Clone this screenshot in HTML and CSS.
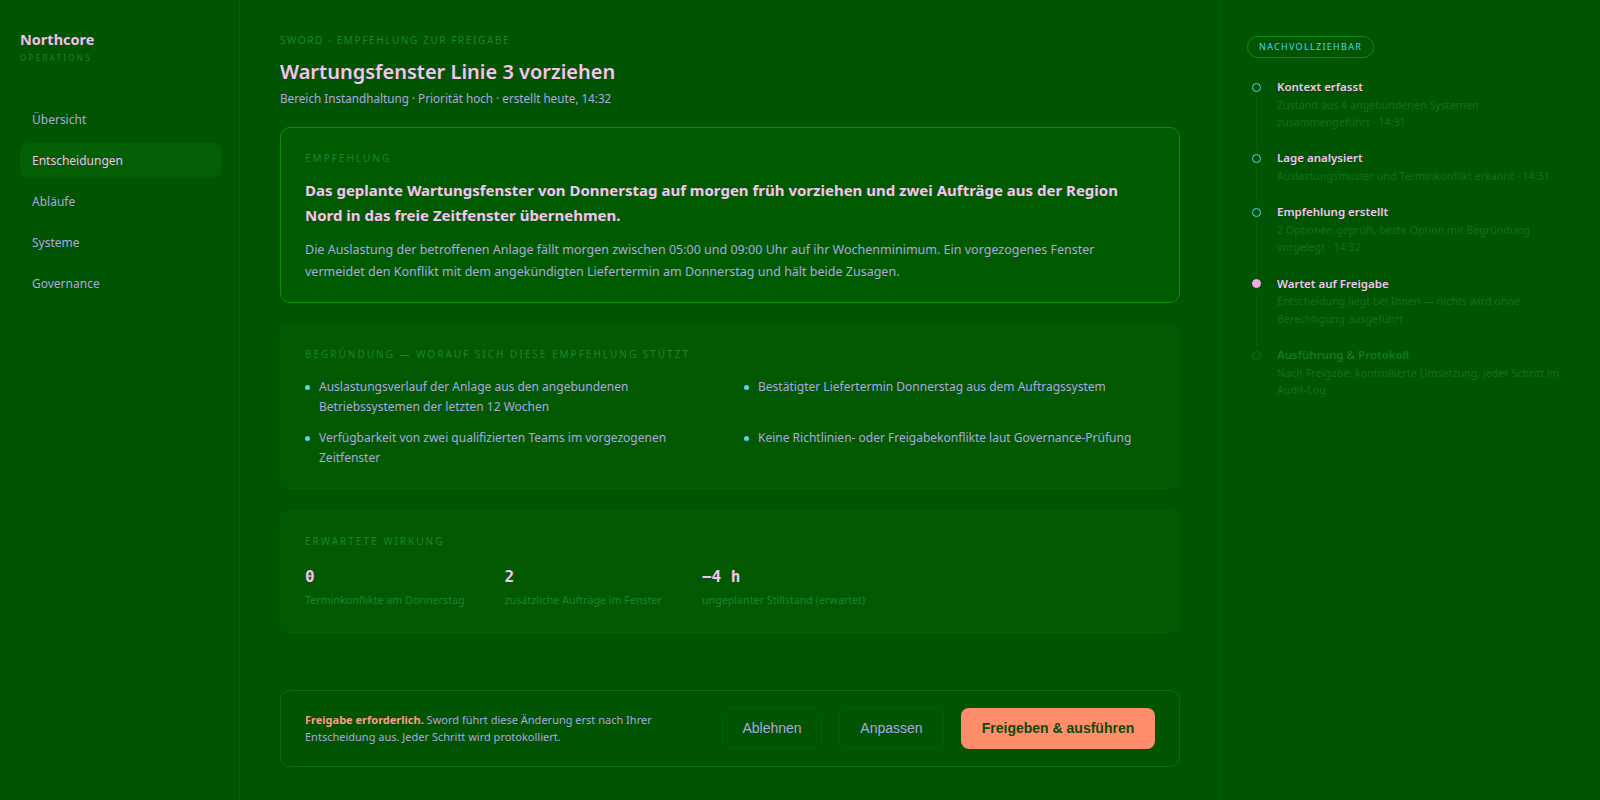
FILE: index.html
```html
<!DOCTYPE html>
<html lang="de">
<head>
<meta charset="utf-8">
<title>Northcore Operations</title>
<link rel="stylesheet" href="styles.css">
</head>
<body>
<div class="app">
  <aside class="sidebar">
    <div class="brand">
      <div class="brand-name">Northcore</div>
      <div class="brand-sub">OPERATIONS</div>
    </div>
    <nav class="nav">
      <a class="nav-item">Übersicht</a>
      <a class="nav-item active">Entscheidungen</a>
      <a class="nav-item">Abläufe</a>
      <a class="nav-item">Systeme</a>
      <a class="nav-item">Governance</a>
    </nav>
  </aside>

  <main class="main">
    <header class="page-head">
      <div class="eyebrow">SWORD · EMPFEHLUNG ZUR FREIGABE</div>
      <h1 class="title">Wartungsfenster Linie 3 vorziehen</h1>
      <div class="meta">Bereich Instandhaltung · Priorität hoch · erstellt heute, 14:32</div>
    </header>

    <section class="card card-primary">
      <div class="label">EMPFEHLUNG</div>
      <p class="headline">Das geplante Wartungsfenster von Donnerstag auf morgen früh vorziehen und zwei Aufträge aus der Region Nord in das freie Zeitfenster übernehmen.</p>
      <p class="body">Die Auslastung der betroffenen Anlage fällt morgen zwischen 05:00 und 09:00 Uhr auf ihr Wochenminimum. Ein vorgezogenes Fenster vermeidet den Konflikt mit dem angekündigten Liefertermin am Donnerstag und hält beide Zusagen.</p>
    </section>

    <section class="card card-reasons">
      <div class="label">BEGRÜNDUNG — WORAUF SICH DIESE EMPFEHLUNG STÜTZT</div>
      <ul class="reasons">
        <li>Auslastungsverlauf der Anlage aus den angebundenen Betriebssystemen der letzten 12 Wochen</li>
        <li>Bestätigter Liefertermin Donnerstag aus dem Auftragssystem</li>
        <li>Verfügbarkeit von zwei qualifizierten Teams im vorgezogenen Zeitfenster</li>
        <li>Keine Richtlinien- oder Freigabekonflikte laut Governance-Prüfung</li>
      </ul>
    </section>

    <section class="card card-impact">
      <div class="label">ERWARTETE WIRKUNG</div>
      <div class="impact">
        <div class="metric">
          <div class="metric-value">0</div>
          <div class="metric-label">Terminkonflikte am Donnerstag</div>
        </div>
        <div class="metric">
          <div class="metric-value">2</div>
          <div class="metric-label">zusätzliche Aufträge im Fenster</div>
        </div>
        <div class="metric">
          <div class="metric-value">−4 h</div>
          <div class="metric-label">ungeplanter Stillstand (erwartet)</div>
        </div>
      </div>
    </section>

    <section class="action-bar">
      <p class="action-text"><strong>Freigabe erforderlich.</strong> Sword führt diese Änderung erst nach Ihrer Entscheidung aus. Jeder Schritt wird protokolliert.</p>
      <div class="actions">
        <button class="btn btn-ghost">Ablehnen</button>
        <button class="btn btn-ghost btn-adjust">Anpassen</button>
        <button class="btn btn-primary">Freigeben &amp; ausführen</button>
      </div>
    </section>
  </main>

  <aside class="trail">
    <div class="badge">NACHVOLLZIEHBAR</div>
    <ol class="steps">
      <li class="step done">
        <span class="dot"></span>
        <div class="step-title">Kontext erfasst</div>
        <div class="step-desc">Zustand aus 4 angebundenen Systemen zusammengeführt · 14:31</div>
      </li>
      <li class="step done">
        <span class="dot"></span>
        <div class="step-title">Lage analysiert</div>
        <div class="step-desc">Auslastungsmuster und Terminkonflikt erkannt · 14:31</div>
      </li>
      <li class="step done">
        <span class="dot"></span>
        <div class="step-title">Empfehlung erstellt</div>
        <div class="step-desc">2 Optionen geprüft, beste Option mit Begründung vorgelegt · 14:32</div>
      </li>
      <li class="step current">
        <span class="dot"></span>
        <div class="step-title">Wartet auf Freigabe</div>
        <div class="step-desc">Entscheidung liegt bei Ihnen — nichts wird ohne Berechtigung ausgeführt</div>
      </li>
      <li class="step pending">
        <span class="dot"></span>
        <div class="step-title">Ausführung &amp; Protokoll</div>
        <div class="step-desc">Nach Freigabe: kontrollierte Umsetzung, jeder Schritt im Audit-Log</div>
      </li>
    </ol>
  </aside>
</div>
</body>
</html>
```

FILE: styles.css
```css
* { box-sizing: border-box; }

html, body {
  margin: 0;
  padding: 0;
  height: 100%;
}

body {
  background: #015401;
  color: #f6bdf0;
  font-family: "Noto Sans", "Open Sans", "DejaVu Sans", sans-serif;
  overflow: hidden;
}

.app {
  display: grid;
  grid-template-columns: 240px 980px 380px;
  height: 800px;
}

/* Sidebar */
.sidebar {
  border-right: 1px solid #0a5c0a;
  padding: 29px 17px 0 20px;
}

.brand-name {
  font-size: 14.5px;
  font-weight: 700;
  color: #f6bdf0;
  line-height: 20px;
}

.brand-sub {
  margin-top: 4px;
  font-size: 8px;
  letter-spacing: 2.3px;
  color: #1b8530;
  line-height: 10px;
}

.nav {
  display: flex;
  flex-direction: column;
  gap: 6px;
  margin-top: 39px;
}

.nav-item {
  display: block;
  padding: 8px 12px;
  font-size: 12px;
  line-height: 19px;
  color: #aea6e2;
  border-radius: 8px;
}

.nav-item.active {
  background: #035f03;
  color: #f6bdf0;
}

/* Main */
.main {
  padding: 33px 40px 33px;
  display: flex;
  flex-direction: column;
  gap: 21px;
}

.eyebrow {
  font-size: 10px;
  letter-spacing: 1.6px;
  color: #1b8530;
  line-height: 14px;
}

.title {
  margin: 11.5px 0 0;
  font-size: 20px;
  font-weight: 600;
  line-height: 26px;
  color: #f8c2f4;
}

.meta {
  margin-top: 6.5px;
  font-size: 11.7px;
  color: #aea6e2;
  line-height: 15px;
}

.card {
  border: 1px solid #045f04;
  background: #025902;
  border-radius: 10px;
  padding: 22.5px 24px 20px;
}

.card-primary {
  border-color: #128c12;
  background: #005a00;
  padding-bottom: 18px;
}

.card-impact { padding-bottom: 24px; }

.label {
  font-size: 10px;
  letter-spacing: 2px;
  color: #1b8530;
  line-height: 14px;
}

.headline {
  margin: 13.5px 0 0;
  max-width: 838px;
  font-size: 15px;
  font-weight: 700;
  line-height: 24.5px;
  color: #f8c2f4;
}

.body {
  margin: 11.8px 0 0;
  max-width: 835px;
  font-size: 12.5px;
  line-height: 22.4px;
  color: #aea6e2;
}

.reasons {
  list-style: none;
  margin: 15.5px 0 0;
  padding: 0;
  display: grid;
  grid-template-columns: 1fr 1fr;
  column-gap: 28px;
  row-gap: 10.2px;
}

.reasons li {
  position: relative;
  padding-left: 14px;
  font-size: 12px;
  line-height: 20.4px;
  color: #aea6e2;
}

.reasons li::before {
  content: "";
  position: absolute;
  left: 0;
  top: 8px;
  width: 5px;
  height: 5px;
  border-radius: 50%;
  background: #4fd6f4;
}

.impact {
  display: flex;
  gap: 40px;
  margin-top: 18.5px;
}

.metric-value {
  font-family: "DejaVu Sans Mono", "Liberation Mono", monospace;
  font-size: 16px;
  font-weight: 700;
  line-height: 22px;
  color: #f8c2f4;
}

.metric-label {
  margin-top: 3.5px;
  font-size: 10.7px;
  color: #1b8530;
  line-height: 16px;
}

/* Action bar */
.action-bar {
  margin-top: auto;
  border: 1px solid #0b700b;
  border-radius: 10px;
  padding: 0 24px;
  height: 77.5px;
  display: flex;
  align-items: center;
  justify-content: space-between;
  gap: 24px;
}

.action-text {
  margin: 0;
  max-width: 370px;
  font-size: 11px;
  line-height: 17.4px;
  color: #aea6e2;
}

.action-text strong {
  color: #ff9a84;
  font-weight: 700;
}

.actions {
  display: flex;
  gap: 17px;
}

.btn {
  font-family: "Liberation Sans", Arial, sans-serif;
  font-size: 14px;
  height: 41px;
  border-radius: 8px;
  cursor: pointer;
}

.btn-ghost {
  background: transparent;
  border: 1px solid #045f04;
  color: #aea6e2;
  width: 100px;
  padding: 0;
}

.btn-adjust { width: 105px; }

.btn-primary {
  background: #ff8d6c;
  border: none;
  color: #0b4b0b;
  font-weight: 700;
  width: 194px;
  padding: 0;
}

/* Trail */
.trail {
  border-left: 1px solid #0a5c0a;
  padding: 32.5px 36px 0 26px;
}

.badge {
  display: inline-block;
  border: 1px solid #0f8a1a;
  border-radius: 999px;
  padding: 4px 11px;
  font-size: 9px;
  letter-spacing: 1.3px;
  line-height: 12px;
  color: #4fd6f4;
}

.steps {
  list-style: none;
  margin: 20.5px 0 0;
  padding: 0;
}

.step {
  position: relative;
  padding-left: 30px;
  padding-bottom: 17.8px;
}

.step::after {
  content: "";
  position: absolute;
  left: 9px;
  top: 18px;
  bottom: 0;
  width: 1px;
  background: #0a600a;
}

.step:last-child::after { display: none; }

.dot {
  position: absolute;
  left: 5px;
  top: 4.5px;
  width: 9px;
  height: 9px;
  border-radius: 50%;
  border: 1.5px solid #4fd6f4;
}

.step.current .dot {
  background: #f8a8e8;
  border-color: #f8a8e8;
}

.step.pending .dot {
  border-color: #0d6e1a;
}

.step-title {
  font-size: 11.5px;
  font-weight: 600;
  line-height: 18px;
  color: #f8c2f4;
}

.step.pending .step-title { color: #137a22; }

.step-desc {
  margin-top: 0.6px;
  font-size: 10.7px;
  line-height: 17.5px;
  color: #127020;
}
```
